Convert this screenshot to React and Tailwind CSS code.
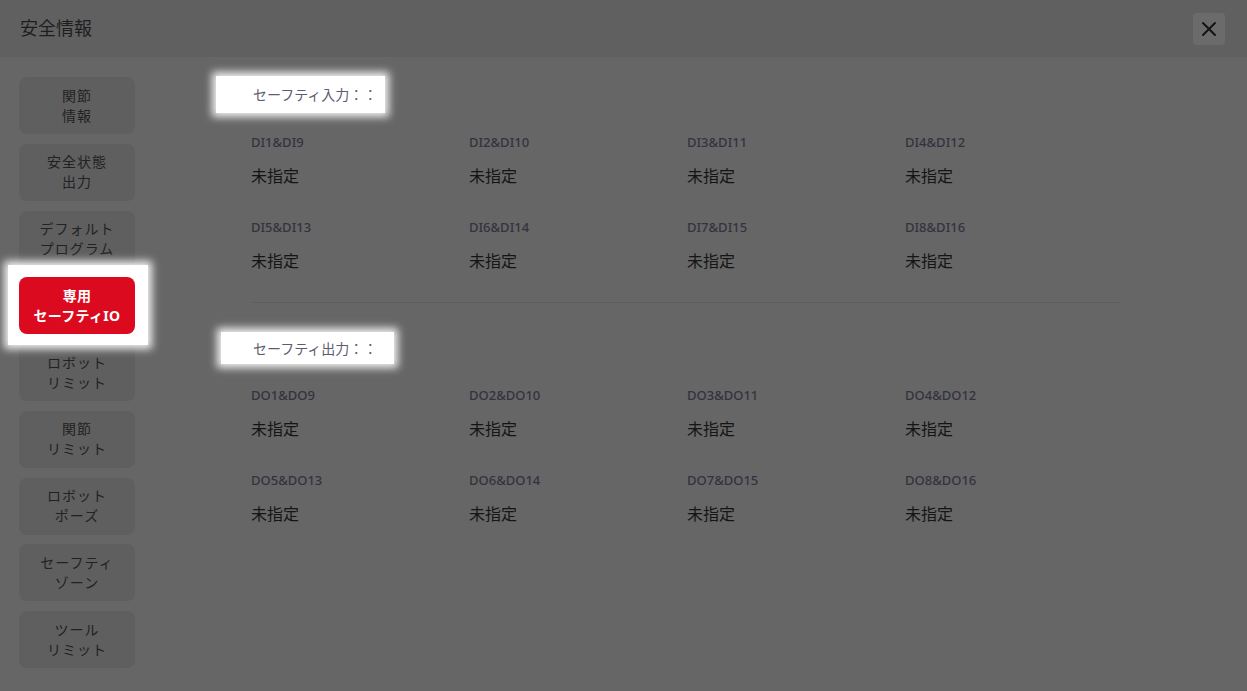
import React from "react";

const font = { fontFamily: '"Noto Sans", "Noto Sans CJK JP", sans-serif' };

const navItems = [
  ["関節", "情報"],
  ["安全状態", "出力"],
  ["デフォルト", "プログラム"],
  ["専用", "セーフティIO"],
  ["ロボット", "リミット"],
  ["関節", "リミット"],
  ["ロボット", "ポーズ"],
  ["セーフティ", "ゾーン"],
  ["ツール", "リミット"],
];

const diLabels = [
  "DI1&DI9", "DI2&DI10", "DI3&DI11", "DI4&DI12",
  "DI5&DI13", "DI6&DI14", "DI7&DI15", "DI8&DI16",
];
const doLabels = [
  "DO1&DO9", "DO2&DO10", "DO3&DO11", "DO4&DO12",
  "DO5&DO13", "DO6&DO14", "DO7&DO15", "DO8&DO16",
];

function Grid({ labels }) {
  return (
    <div className="grid grid-cols-[218px_218px_218px_218px] gap-y-[29px]">
      {labels.map((l) => (
        <div key={l} className="flex flex-col">
          <div className="h-[20px] leading-[20px] text-[13px] font-medium text-[#33333f]">{l}</div>
          <div className="h-[24px] leading-[24px] mt-3 text-[16px] text-[#151515]">未指定</div>
        </div>
      ))}
    </div>
  );
}

export default function App() {
  return (
    <div className="w-[1247px] h-[691px] bg-[#666666] flex flex-col overflow-hidden" style={font}>
      <div className="h-[57px] bg-[#606061] flex items-center justify-between pl-5 pr-[22px] shrink-0">
        <div className="text-[18px] text-[#1e1e1e]">安全情報</div>
        <div className="w-[32px] h-[32px] rounded bg-[#6b6b6b] flex items-center justify-center">
          <svg width="16" height="16" viewBox="0 0 16 16" fill="none" stroke="#141414" strokeWidth="2" strokeLinecap="round">
            <path d="M2 2 L14 14 M14 2 L2 14" />
          </svg>
        </div>
      </div>
      <div className="flex flex-1">
        <div className="pl-[19px] pt-[20px] flex flex-col gap-[9.75px] w-[180px] shrink-0">
          {navItems.map(([a, b], i) => {
            const active = i === 3;
            if (active) {
              return (
                <div key={i} className="relative w-[116px] h-[57px]">
                  <div className="absolute -left-[11px] -top-[12px] w-[140px] h-[80px] bg-white shadow-[0_0_8px_4px_rgba(255,255,255,0.9)]" />
                  <div className="relative w-[116px] h-[57px] rounded-lg bg-[#dc0a1e] flex flex-col items-center justify-center text-white font-bold text-[14px] leading-[20px] tracking-[0.3px]">
                    <div>{a}</div>
                    <div>{b}</div>
                  </div>
                </div>
              );
            }
            return (
              <div key={i} className="w-[116px] h-[57px] rounded-lg bg-[#5f5f60] flex flex-col items-center justify-center text-[#222222] text-[14px] leading-[20px] tracking-[1px]">
                <div>{a}</div>
                <div>{b}</div>
              </div>
            );
          })}
        </div>
        <div className="flex-1 flex flex-col">
          <div className="ml-[36px] mt-[19px] w-[169px] h-[37px] bg-white shadow-[0_0_8px_4px_rgba(255,255,255,0.9)] flex items-center pl-[37px] text-[14px] text-[#5c5c6e]">
            セーフティ入力：：
          </div>
          <div className="mt-[19px] ml-[71px]">
            <Grid labels={diLabels} />
          </div>
          <div className="mt-[29px] ml-[71px] w-[869px] h-px bg-[#5e5e5e]" />
          <div className="ml-[41px] mt-[29px] w-[173px] h-[32px] bg-white shadow-[0_0_8px_4px_rgba(255,255,255,0.9)] flex items-center pl-[32px] text-[14px] text-[#5c5c6e]">
            セーフティ出力：：
          </div>
          <div className="mt-[21px] ml-[71px]">
            <Grid labels={doLabels} />
          </div>
        </div>
      </div>
    </div>
  );
}
